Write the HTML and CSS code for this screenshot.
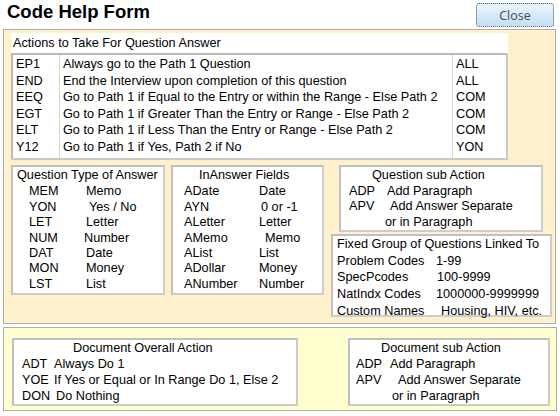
FILE: index.html
```html
<!doctype html>
<html>
<head>
  <link rel="stylesheet" href="styles.css">
</head>
<body>

  <div class="topbar">
    <h1 class="title">Code Help Form</h1>
    <button class="closeButton">Close</button>
  </div>

  <div class="panel upper">
    <div class="actions">
      <div class="actionsHead">Actions to Take For Question Answer</div>
      <table class="actionTable">
        <tr><td class="code">EP1</td><td class="desc">Always go to the Path 1 Question</td><td class="kind">ALL</td></tr>
        <tr><td class="code">END</td><td class="desc">End the Interview upon completion of this question</td><td class="kind">ALL</td></tr>
        <tr><td class="code">EEQ</td><td class="desc">Go to Path 1 if Equal to the Entry or within the Range - Else Path 2</td><td class="kind">COM</td></tr>
        <tr><td class="code">EGT</td><td class="desc">Go to Path 1 if Greater Than the Entry or Range - Else Path 2</td><td class="kind">COM</td></tr>
        <tr><td class="code">ELT</td><td class="desc">Go to Path 1 if Less Than the Entry or Range - Else Path 2</td><td class="kind">COM</td></tr>
        <tr><td class="code">Y12</td><td class="desc">Go to Path 1 if Yes, Path 2 if No</td><td class="kind">YON</td></tr>
      </table>
    </div>

    <div class="middle">
      <div class="box typeBox">
        <div class="boxHead">Question Type of Answer</div>
        <div class="pairs">
          <span>MEM</span><span>Memo</span>
          <span>YON</span><span class="nudge3">Yes / No</span>
          <span>LET</span><span>Letter</span>
          <span>NUM</span><span class="nudgeBack">Number</span>
          <span>DAT</span><span>Date</span>
          <span>MON</span><span>Money</span>
          <span>LST</span><span>List</span>
        </div>
      </div>

      <div class="box fieldBox">
        <div class="boxHead">InAnswer Fields</div>
        <div class="pairs">
          <span>ADate</span><span>Date</span>
          <span>AYN</span><span class="nudge2">0 or -1</span>
          <span>ALetter</span><span>Letter</span>
          <span>AMemo</span><span class="nudge6">Memo</span>
          <span>AList</span><span>List</span>
          <span>ADollar</span><span>Money</span>
          <span>ANumber</span><span>Number</span>
        </div>
      </div>

      <div class="rightCol">
        <div class="box subBox">
          <div class="boxHead">Question sub Action</div>
          <div class="pairs">
            <span>ADP</span><span>Add Paragraph</span>
            <span>APV</span><span class="nudge3">Add Answer Separate</span>
            <span></span><span class="nudgeBack">or in Paragraph</span>
          </div>
        </div>
        <div class="box fixedBox">
          <div class="boxHead">Fixed Group of Questions Linked To</div>
          <div class="pairs">
            <span>Problem Codes</span><span>1-99</span>
            <span>SpecPcodes</span><span class="nudge1">100-9999</span>
            <span>NatIndx Codes</span><span>1000000-9999999</span>
            <span>Custom Names</span><span class="nudge5">Housing, HIV, etc.</span>
          </div>
        </div>
      </div>
    </div>
  </div>

  <div class="panel lower">
    <div class="box docBox">
      <div class="boxHead">Document Overall Action</div>
      <div class="pairs">
        <span>ADT</span><span>Always Do 1</span>
        <span>YOE</span><span>If Yes or Equal or In Range Do 1, Else 2</span>
        <span>DON</span><span class="nudge2">Do Nothing</span>
      </div>
    </div>
    <div class="box docSubBox">
      <div class="boxHead">Document sub Action</div>
      <div class="pairs">
        <span>ADP</span><span>Add Paragraph</span>
        <span>APV</span><span class="nudge8">Add Answer Separate</span>
        <span></span><span class="nudge2">or in Paragraph</span>
      </div>
    </div>
  </div>

</body>
</html>
```

FILE: styles.css
```css
body{
  margin: 0;
  background: #ffffff;
  font-family: "Liberation Sans", Arial, sans-serif;
  font-size: 12.7px;
  color: #000000;
}

/* title + close button */
.topbar{
  display: flex;
  justify-content: space-between;
  align-items: flex-start;
  height: 29px;
}
.title{
  margin: 0;
  padding: 1px 0 0 7px;
  font-size: 18.5px;
  font-weight: bold;
  line-height: 22px;
}
.closeButton{
  margin: 3px 6px 0 0;
  width: 78px;
  height: 24px;
  padding: 0;
  border: 1px dotted #3f5b7a;
  border-radius: 3px;
  background: linear-gradient(to bottom, #ecf5fd, #d9eafa 50%, #c4ddf4);
  font-family: "Open Sans", "DejaVu Sans", sans-serif;
  font-size: 12.5px;
  color: #4a4a4a;
}

/* yellow panels */
.panel{
  border: 1px solid #adadad;
  box-sizing: border-box;
}
.upper{
  margin-left: 3px;
  width: 553px;
  height: 295px;
  background: #fff1cc;
  padding: 3px 0 0 7px;
}
.lower{
  margin: 3px 0 0 3px;
  width: 554px;
  height: 84px;
  background: #ffffcf;
  display: flex;
  align-items: flex-start;
  padding: 10px 0 0 8px;
}

/* actions table */
.actions{
  width: 497px;
}
.actionsHead{
  background: #ffffff;
  height: 20px;
  line-height: 20px;
  padding-left: 2px;
}
.actionTable{
  width: 497px;
  border-collapse: collapse;
  background: #ffffff;
  border: 2px solid #c9c9c9;
  border-left-color: #b9b9b9;
  border-top-color: #b9b9b9;
}
.actionTable td{
  padding: 0 0 0 3px;
  height: 16.5px;
  line-height: 16px;
  vertical-align: middle;
  white-space: nowrap;
}
.actionTable tr:first-child td{
  padding-top: 1px;
}
.actionTable tr:last-child td{
  padding-bottom: 3px;
}
.code{
  width: 43px;
  border-right: 1px solid #d4d4d4;
}
.desc{
  width: 389px;
  border-right: 1px solid #d4d4d4;
}

/* boxes */
.box{
  background: #ffffff;
  border: 2px solid #cdcdcd;
  border-top-color: #c0c0c0;
  border-left-color: #c0c0c0;
  box-sizing: border-box;
}
.pairs{
  display: grid;
}
.pairs span{
  white-space: nowrap;
}
.middle{
  display: flex;
  align-items: flex-start;
  margin-top: 5px;
}
.typeBox{
  width: 154px;
  height: 130px;
  line-height: 15.4px;
  padding: 1px 0 0 4px;
}
.typeBox .pairs{
  grid-template-columns: 57px auto;
  margin: 1px 0 0 12px;
}
.fieldBox{
  width: 153px;
  height: 130px;
  margin-left: 6px;
  line-height: 15.4px;
  padding: 1px 0 0 11px;
}
.fieldBox .boxHead{
  padding-left: 15px;
}
.fieldBox .pairs{
  grid-template-columns: 75px auto;
  margin-top: 1px;
}
.rightCol{
  display: flex;
  flex-direction: column;
  margin-left: 7px;
}
.subBox{
  width: 204px;
  height: 67px;
  margin-left: 8px;
  line-height: 15.6px;
  padding: 1px 0 0 8px;
}
.subBox .boxHead{
  padding-left: 23px;
}
.subBox .pairs{
  grid-template-columns: 38px auto;
}
.fixedBox{
  width: 221px;
  height: 83px;
  margin-top: 2px;
  line-height: 16.7px;
  padding: 0 0 0 4px;
}
.fixedBox .pairs{
  grid-template-columns: 99px auto;
}
.docBox{
  width: 286px;
  height: 68px;
  line-height: 16px;
  padding: 0 0 0 8px;
}
.docBox .boxHead{
  padding-left: 51px;
}
.docBox .pairs{
  grid-template-columns: 32px auto;
}
.docSubBox{
  width: 202px;
  height: 68px;
  margin-left: 50px;
  line-height: 16px;
  padding: 0 0 0 6px;
}
.docSubBox .boxHead{
  padding-left: 25px;
}
.docSubBox .pairs{
  grid-template-columns: 34px auto;
}

/* hand-typed spacing offsets */
.nudge1{ padding-left: 1px; }
.nudge2{ padding-left: 2px; }
.nudge3{ padding-left: 3px; }
.nudge5{ padding-left: 5px; }
.nudge6{ padding-left: 6px; }
.nudge8{ padding-left: 8px; }
.nudgeBack{ margin-left: -2px; }
```
